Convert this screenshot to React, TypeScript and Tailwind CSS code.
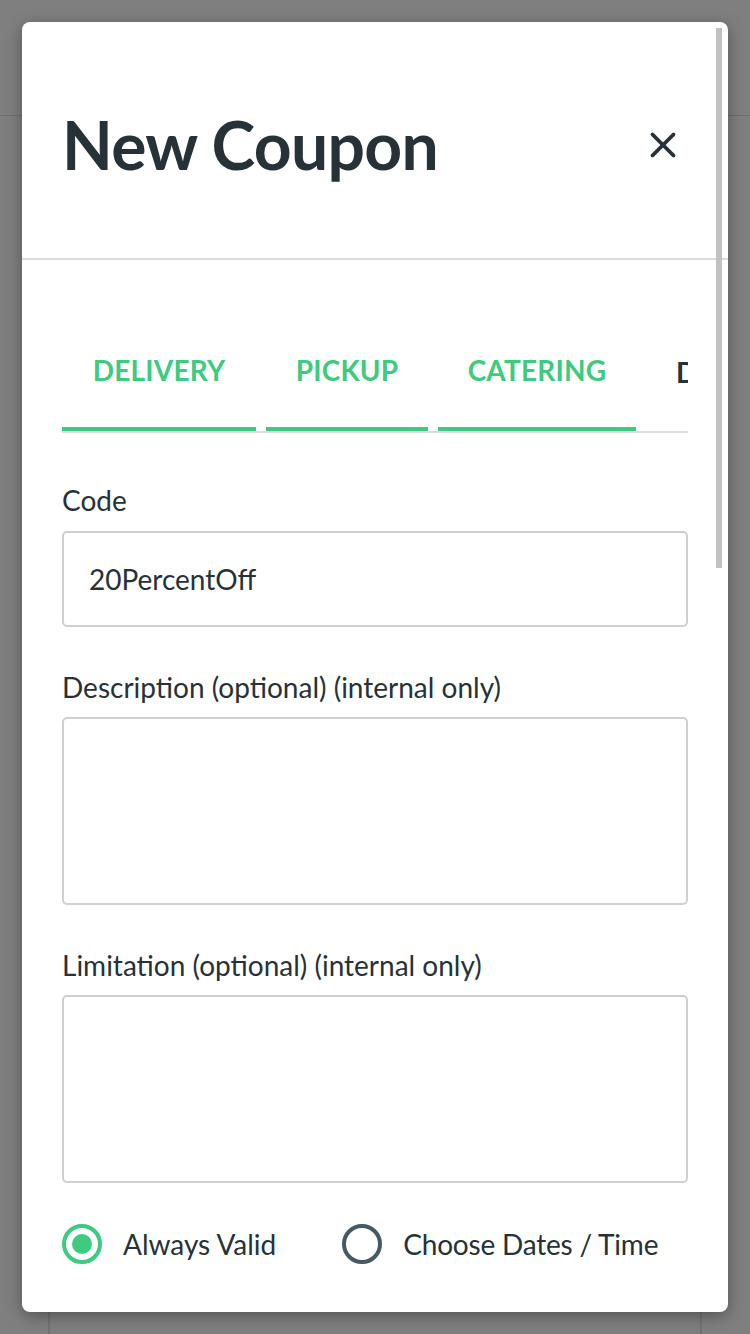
import React, { useState } from "react";
import { X } from "lucide-react";

const tabs = [
  { label: "DELIVERY", width: "w-[194px]" },
  { label: "PICKUP", width: "w-[162px]" },
  { label: "CATERING", width: "w-[198px]" },
  { label: "DINE IN", width: "w-[160px]" },
];

function App() {
  const [validity, setValidity] = useState<string>("always");
  const [code, setCode] = useState<string>("20PercentOff");

  return (
    <div className="relative h-[1334px] w-[750px] overflow-hidden bg-white font-['Lato','Noto_Sans',sans-serif] text-[#263238]">
      {/* page behind the modal */}
      <div className="h-[116px] border-b border-[#dedede]" />
      <div className="mx-[48px] mt-[1196px] h-[200px] border-x-2 border-[#e5e5e5] pt-[10px] text-center text-[64px] font-bold text-[#3ccb7f]">
        $14.95
      </div>

      {/* overlay */}
      <div className="absolute inset-0 bg-black/50" />

      <div className="absolute left-[22px] top-[22px] flex h-[1290px] w-[706px] flex-col overflow-hidden rounded-[8px] bg-white shadow-[0_4px_16px_rgba(0,0,0,0.35)]">
        <div className="absolute right-[6px] top-[6px] h-[540px] w-[6px] bg-[#c1c1c1]" />

        <div className="flex h-[238px] shrink-0 items-center justify-between border-b-2 border-[#dadada] pl-[40px] pr-[44px] pt-[10px]">
          <h1 className="text-[66px] font-bold leading-none tracking-[-0.7px]">New Coupon</h1>
          <X size={42} strokeWidth={2.2} className="text-[#263238]" />
        </div>

        <div className="px-[40px]">
          <div className="mt-[53px] flex w-[626px] overflow-hidden border-b-2 border-[#dddddd]">
            {tabs.map((t, i) => (
              <div
                key={t.label}
                className={`mr-[10px] flex h-[118px] shrink-0 items-center text-[28px] font-bold tracking-[0.2px] ${t.width} ${
                  i < 3 ? "justify-center border-b-4 border-[#3ccb7f] text-[#3ccb7f]" : "pl-[30px] text-[#263238]"
                }`}
              >
                {t.label}
              </div>
            ))}
          </div>

          <label className="mt-[52px] block text-[28px] leading-[30px]">Code</label>
          <input
            className="mt-[16px] h-[96px] w-[626px] rounded-[5px] border-2 border-[#cdd0d3] px-[25px] text-[28px] text-[#263238] outline-none"
            value={code}
            onChange={(e) => setCode(e.target.value)}
          />

          <label className="mt-[45px] block text-[28px] leading-[30px]">Description (optional) (internal only)</label>
          <textarea className="mt-[15px] block h-[188px] w-[626px] resize-none rounded-[5px] border-2 border-[#cdd0d3] outline-none" />

          <label className="mt-[45px] block text-[28px] leading-[30px]">Limitation (optional) (internal only)</label>
          <textarea className="mt-[15px] block h-[188px] w-[626px] resize-none rounded-[5px] border-2 border-[#cdd0d3] outline-none" />

          <div className="mt-[40px] flex items-center">
            <button className="flex items-center" onClick={() => setValidity("always")}>
              <span
                className={`flex h-[40px] w-[40px] items-center justify-center rounded-full border-4 ${
                  validity === "always" ? "border-[#3ccb7f]" : "border-[#455a64]"
                }`}
              >
                {validity === "always" && <span className="h-[20px] w-[20px] rounded-full bg-[#3ccb7f]" />}
              </span>
              <span className="ml-[21px] text-[28px]">Always Valid</span>
            </button>
            <button className="ml-[66px] flex items-center" onClick={() => setValidity("dates")}>
              <span
                className={`flex h-[40px] w-[40px] items-center justify-center rounded-full border-4 ${
                  validity === "dates" ? "border-[#3ccb7f]" : "border-[#455a64]"
                }`}
              >
                {validity === "dates" && <span className="h-[20px] w-[20px] rounded-full bg-[#3ccb7f]" />}
              </span>
              <span className="ml-[21px] text-[28px] tracking-[-0.2px]">Choose Dates / Time</span>
            </button>
          </div>
        </div>
      </div>
    </div>
  );
}

export default App;
